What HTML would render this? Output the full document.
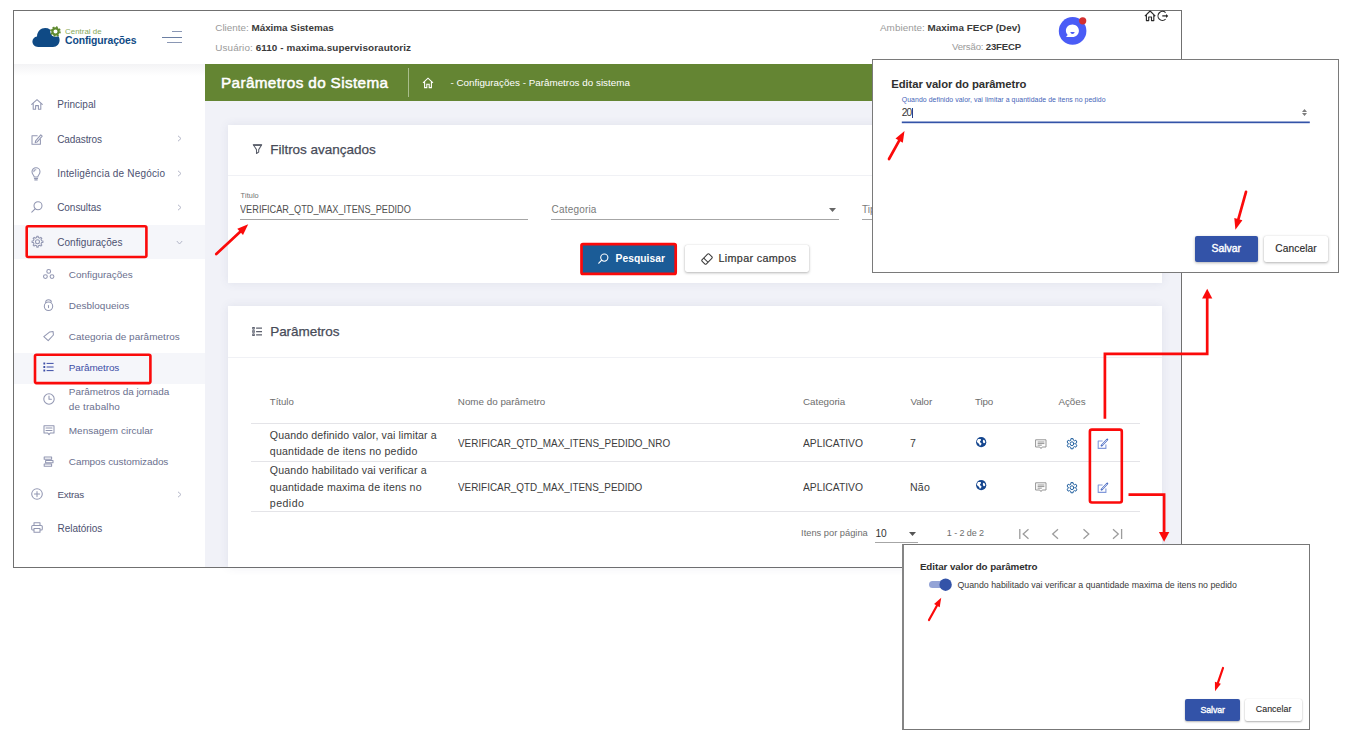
<!DOCTYPE html>
<html><head><meta charset="utf-8"><title>Parametros</title>
<style>
html,body{margin:0;padding:0;background:#fff;}
body{width:1350px;height:741px;position:relative;overflow:hidden;font-family:"Liberation Sans",sans-serif;}
.a{position:absolute;box-sizing:border-box;}
.t{position:absolute;white-space:nowrap;margin:0;padding:0;}
svg{position:absolute;overflow:visible;}
</style></head><body>
<div class="a" style="left:13.0px;top:10.0px;width:1169.0px;height:558.0px;background:#fff;border:1px solid #707070;"></div>
<div class="a" style="left:205.0px;top:101.0px;width:976.0px;height:466.0px;background:#f1f2f8;"></div>
<div class="a" style="left:14.0px;top:64.0px;width:191.0px;height:12.0px;background:linear-gradient(#f3f3f5,#ffffff);"></div>
<div class="a" style="left:205.0px;top:64.0px;width:976.0px;height:37.0px;background:#648533;"></div>
<svg style="left:32px;top:26px" width="30" height="22" viewBox="0 0 30 22">
<path d="M6.2 21 C2.6 21 0.4 18.6 0.4 15.6 C0.4 12.8 2.4 10.8 5 10.4 C5.2 5.4 8.8 2 13.2 2 C16.8 2 19.6 4 20.8 7.2 C24.6 7.2 27.6 10 27.6 14 C27.6 18 24.8 21 21 21 Z" fill="#0f4a85"/>
<circle cx="23.5" cy="5.5" r="5.2" fill="#fff"/>
<circle cx="23.5" cy="5.5" r="3.1" fill="none" stroke="#5f8a2f" stroke-width="2.2"/>
<circle cx="23.5" cy="5.5" r="4.5" fill="none" stroke="#5f8a2f" stroke-width="1.6" stroke-dasharray="1.8 1.73"/>
</svg>
<div class="t" style="left:65.0px;top:25.7px;font-size:7.90px;line-height:11px;letter-spacing:0.025px;color:#86a95a;">Central de</div>
<div class="t" style="left:65.0px;top:34.3px;font-size:10.40px;line-height:14px;letter-spacing:-0.101px;color:#0f4a85;"><span style="font-weight:700;">Configurações</span></div>
<div class="a" style="left:171.5px;top:30.8px;width:10.0px;height:1.0px;background:#8a97b4;"></div>
<div class="a" style="left:162.0px;top:36.6px;width:20.0px;height:1.2px;background:#6b7fa3;"></div>
<div class="a" style="left:167.0px;top:42.2px;width:15.0px;height:1.0px;background:#8a97b4;"></div>
<div class="t" style="left:215.3px;top:20.8px;font-size:9.90px;line-height:14px;letter-spacing:-0.011px;color:#333;"><span style="color:#9a9a9a;">Cliente: </span><span style="font-weight:700;color:#3a3a3a;">Máxima Sistemas</span></div>
<div class="t" style="left:215.3px;top:40.7px;font-size:9.90px;line-height:14px;letter-spacing:0.093px;color:#333;"><span style="color:#9a9a9a;">Usuário: </span><span style="font-weight:700;color:#3a3a3a;">6110 - maxima.supervisorautoriz</span></div>
<div class="t" style="left:880.0px;top:20.7px;font-size:9.90px;line-height:14px;letter-spacing:0.032px;color:#333;"><span style="color:#9a9a9a;">Ambiente: </span><span style="font-weight:700;color:#3a3a3a;">Maxima FECP (Dev)</span></div>
<div class="t" style="left:952.0px;top:40.4px;font-size:9.60px;line-height:14px;letter-spacing:-0.179px;color:#333;"><span style="color:#9a9a9a;">Versão: </span><span style="font-weight:700;color:#3a3a3a;">23FECP</span></div>
<svg style="left:1058px;top:16px" width="30" height="30" viewBox="0 0 30 30">
<circle cx="14.6" cy="14.9" r="13.8" fill="#4a5cf6"/>
<path d="M14.4 8.5 c3.7 0 6.5 2.8 6.5 6.3 c0 3.5 -2.8 6.3 -6.5 6.3 h-5.6 c-0.5 0 -0.7 -0.5 -0.3 -0.9 l1.2 -1.2 c-1.1 -1.1 -1.8 -2.6 -1.8 -4.2 c0 -3.5 2.8 -6.3 6.5 -6.3z" fill="#fff"/>
<path d="M12.3 16 h4.4 c-0.3 1.3 -1.2 1.9 -2.2 1.9 c-1 0 -1.9 -0.6 -2.2 -1.9z" fill="#4a5cf6"/>
<circle cx="24.7" cy="4.8" r="3.6" fill="#d32f2f"/>
</svg>
<svg style="left:1144px;top:10px" width="26" height="12" viewBox="0 0 26 12">
<path d="M0.9 6.2 L6.1 1.0 L11.3 6.2 M2.4 5.0 V10.6 H4.7 V7.0 H7.5 V10.6 H9.8 V5.0" fill="none" stroke="#2a2a2a" stroke-width="1.15" stroke-linejoin="round"/>
<path d="M21.6 2.6 A4.5 4.5 0 1 0 21.6 9.2" fill="none" stroke="#2a2a2a" stroke-width="1.1"/>
<path d="M18.3 5.9 H23.2" fill="none" stroke="#2a2a2a" stroke-width="1.3"/><path d="M22 3.9 L24.2 5.9 L22 7.9Z" fill="#2a2a2a"/>
</svg>
<div class="t" style="left:221.0px;top:72.6px;font-size:15.30px;line-height:20px;letter-spacing:0.359px;color:#ffffff;-webkit-text-stroke:0.50px #ffffff;">Parâmetros do Sistema</div>
<div class="a" style="left:408.0px;top:68.0px;width:1.0px;height:29.0px;background:#a9bd8c;"></div>
<svg style="left:421.5px;top:77px" width="12" height="12" viewBox="0 0 12 12">
<path d="M1 5.8 L6 1.2 L11 5.8 M2.6 4.8 V10.6 H4.8 V7.2 H7.2 V10.6 H9.4 V4.8" fill="none" stroke="#fff" stroke-width="1.1"/></svg>
<div class="t" style="left:450.4px;top:75.8px;font-size:9.85px;line-height:14px;letter-spacing:0.001px;color:#ffffff;">- Configurações - Parâmetros do sistema</div>
<div class="a" style="left:14.0px;top:224.5px;width:191.0px;height:34.0px;background:#f5f6fa;"></div>
<div class="a" style="left:14.0px;top:352.5px;width:191.0px;height:31.0px;background:#f5f6fa;"></div>
<div class="t" style="left:57.2px;top:98.4px;font-size:10.00px;line-height:14px;letter-spacing:0.028px;color:#4d5170;">Principal</div>
<div class="t" style="left:57.2px;top:132.7px;font-size:10.00px;line-height:14px;letter-spacing:-0.086px;color:#4d5170;">Cadastros</div>
<div class="t" style="left:57.2px;top:167.2px;font-size:10.00px;line-height:14px;letter-spacing:0.176px;color:#4d5170;">Inteligência de Negócio</div>
<div class="t" style="left:57.2px;top:201.2px;font-size:10.00px;line-height:14px;letter-spacing:-0.052px;color:#4d5170;">Consultas</div>
<div class="t" style="left:57.2px;top:235.5px;font-size:10.00px;line-height:14px;letter-spacing:0.063px;color:#4d5170;">Configurações</div>
<div class="t" style="left:57.5px;top:488.0px;font-size:9.80px;line-height:14px;letter-spacing:-0.246px;color:#4d5170;">Extras</div>
<div class="t" style="left:57.5px;top:522.0px;font-size:10.00px;line-height:14px;letter-spacing:-0.032px;color:#4d5170;">Relatórios</div>
<div class="t" style="left:68.8px;top:267.7px;font-size:9.95px;line-height:14px;letter-spacing:-0.012px;color:#6a6f8e;">Configurações</div>
<div class="t" style="left:68.8px;top:298.7px;font-size:9.95px;line-height:14px;letter-spacing:0.017px;color:#6a6f8e;">Desbloqueios</div>
<div class="t" style="left:68.8px;top:329.8px;font-size:9.95px;line-height:14px;letter-spacing:0.049px;color:#6a6f8e;">Categoria de parâmetros</div>
<div class="t" style="left:68.8px;top:360.8px;font-size:9.95px;line-height:14px;letter-spacing:-0.093px;color:#3c4da6;">Parâmetros</div>
<div class="t" style="left:68.8px;top:385.1px;font-size:9.95px;line-height:14px;letter-spacing:-0.025px;color:#6a6f8e;">Parâmetros da jornada</div>
<div class="t" style="left:68.8px;top:400.0px;font-size:9.95px;line-height:14px;letter-spacing:0.137px;color:#6a6f8e;">de trabalho</div>
<div class="t" style="left:68.8px;top:423.6px;font-size:9.95px;line-height:14px;letter-spacing:0.026px;color:#6a6f8e;">Mensagem circular</div>
<div class="t" style="left:68.8px;top:454.5px;font-size:9.95px;line-height:14px;letter-spacing:-0.055px;color:#6a6f8e;">Campos customizados</div>
<svg style="left:176.5px;top:135.1px" width="5" height="7" viewBox="0 0 5 7"><path d="M1 0.8 L4 3.5 L1 6.2" fill="none" stroke="#b3b6c8" stroke-width="1"/></svg>
<svg style="left:176.5px;top:169.6px" width="5" height="7" viewBox="0 0 5 7"><path d="M1 0.8 L4 3.5 L1 6.2" fill="none" stroke="#b3b6c8" stroke-width="1"/></svg>
<svg style="left:176.5px;top:203.6px" width="5" height="7" viewBox="0 0 5 7"><path d="M1 0.8 L4 3.5 L1 6.2" fill="none" stroke="#b3b6c8" stroke-width="1"/></svg>
<svg style="left:176.5px;top:490.5px" width="5" height="7" viewBox="0 0 5 7"><path d="M1 0.8 L4 3.5 L1 6.2" fill="none" stroke="#b3b6c8" stroke-width="1"/></svg>
<svg style="left:175.5px;top:239.5px" width="7" height="5" viewBox="0 0 7 5"><path d="M0.8 1 L3.5 4 L6.2 1" fill="none" stroke="#b3b6c8" stroke-width="1"/></svg>
<div class="a" style="left:228.3px;top:124.6px;width:933.9px;height:158.8px;background:#fff;box-shadow:0 0 9px rgba(70,80,130,0.10);"></div>
<div class="a" style="left:228.3px;top:175.3px;width:933.9px;height:1.0px;background:#f0f1f5;"></div>
<svg style="left:252px;top:144px" width="11" height="10" viewBox="0 0 11 10"><path d="M1.3 0.8 H9.7 L6.7 5.6 V8 L4.5 9.5 V5.6 Z" fill="none" stroke="#5a5e6a" stroke-width="1.05" stroke-linejoin="round"/><path d="M1.3 1.2 H9.7" stroke="#5a5e6a" stroke-width="1.5"/></svg>
<div class="t" style="left:270.2px;top:140.6px;font-size:13.50px;line-height:18px;letter-spacing:-0.012px;color:#474b58;-webkit-text-stroke:0.25px #474b58;">Filtros avançados</div>
<div class="t" style="left:240.4px;top:190.1px;font-size:7.30px;line-height:11px;letter-spacing:-0.010px;color:#707070;">Título</div>
<div class="t" style="left:240.2px;top:203.0px;font-size:10.10px;line-height:14px;letter-spacing:0.000px;color:#505050;transform:scaleX(0.9095);transform-origin:left center;">VERIFICAR_QTD_MAX_ITENS_PEDIDO</div>
<div class="a" style="left:240.2px;top:219.0px;width:288.0px;height:1.0px;background:#a6a6a6;"></div>
<div class="t" style="left:551.6px;top:202.8px;font-size:10.00px;line-height:14px;letter-spacing:0.182px;color:#7a7a7a;">Categoria</div>
<div class="a" style="left:551.2px;top:219.0px;width:288.0px;height:1.0px;background:#a6a6a6;"></div>
<svg style="left:828.5px;top:207.5px" width="7" height="4" viewBox="0 0 7 4"><path d="M0 0 H7 L3.5 4Z" fill="#666"/></svg>
<div class="t" style="left:862.0px;top:202.8px;font-size:10.00px;line-height:14px;letter-spacing:0.000px;color:#7a7a7a;">Tipo</div>
<div class="a" style="left:862.0px;top:219.0px;width:288.0px;height:1.0px;background:#a6a6a6;"></div>
<div class="a" style="left:581.0px;top:244.0px;width:95.0px;height:30.0px;background:#1b5c97;"></div>
<svg style="left:0;top:0" width="1350" height="741"><rect x="581.5" y="244.1" width="94.2" height="29.8" rx="1.5" fill="#1b5c97" stroke="#fb0a0a" stroke-width="2.7"/></svg>
<svg style="left:598px;top:253px" width="11" height="11" viewBox="0 0 11 11"><circle cx="6.3" cy="4.6" r="3.6" fill="none" stroke="#fff" stroke-width="1.1"/><path d="M3.7 7.2 L0.8 10.2" stroke="#fff" stroke-width="1.2" stroke-linecap="round"/></svg>
<div class="t" style="left:615.5px;top:251.6px;font-size:10.30px;line-height:14px;letter-spacing:0.029px;color:#ffffff;"><span style="font-weight:700;">Pesquisar</span></div>
<div class="a" style="left:684.7px;top:244.6px;width:124.0px;height:27.6px;background:#fff;border-radius:2px;box-shadow:0 1px 3px rgba(0,0,0,0.28),0 0 1px rgba(0,0,0,0.18);"></div>
<svg style="left:700px;top:251.6px" width="14" height="14" viewBox="0 0 14 14"><g transform="translate(7 7) rotate(-45)"><rect x="-5" y="-3" width="10" height="6" rx="1.2" fill="none" stroke="#3a3a3a" stroke-width="1.05"/><path d="M-1.6 -3 V3" stroke="#3a3a3a" stroke-width="1.05"/></g></svg>
<div class="t" style="left:718.5px;top:251.1px;font-size:10.80px;line-height:15px;letter-spacing:0.321px;color:#333;-webkit-text-stroke:0.20px #333;">Limpar campos</div>
<div class="a" style="left:228.3px;top:306.2px;width:933.9px;height:260.8px;background:#fff;box-shadow:0 0 9px rgba(70,80,130,0.10);"></div>
<div class="a" style="left:228.3px;top:356.6px;width:933.9px;height:1.0px;background:#f0f1f5;"></div>
<svg style="left:252px;top:327px" width="11" height="10" viewBox="0 0 11 10"><path d="M4.1 1.2 H10 M4.1 4.5 H10 M4.1 7.9 H10" stroke="#5d616e" stroke-width="1.25"/><path d="M0.2 1.2 H2.8 M0.2 4.5 H2.8 M0.2 7.9 H2.8" stroke="#5d616e" stroke-width="2.3"/><path d="M1.5 1 V8" stroke="#8a8d98" stroke-width="1.6"/></svg>
<div class="t" style="left:270.2px;top:322.6px;font-size:13.50px;line-height:18px;letter-spacing:-0.048px;color:#474b58;-webkit-text-stroke:0.25px #474b58;">Parâmetros</div>
<div class="t" style="left:269.8px;top:395.0px;font-size:9.60px;line-height:14px;letter-spacing:0.000px;color:#6d6d6d;">Título</div>
<div class="t" style="left:457.8px;top:395.0px;font-size:9.80px;line-height:14px;letter-spacing:0.014px;color:#6d6d6d;">Nome do parâmetro</div>
<div class="t" style="left:803.0px;top:395.0px;font-size:9.80px;line-height:14px;letter-spacing:-0.033px;color:#6d6d6d;">Categoria</div>
<div class="t" style="left:910.4px;top:395.0px;font-size:9.80px;line-height:14px;letter-spacing:-0.070px;color:#6d6d6d;">Valor</div>
<div class="t" style="left:974.9px;top:395.0px;font-size:9.80px;line-height:14px;letter-spacing:-0.125px;color:#6d6d6d;">Tipo</div>
<div class="t" style="left:1058.5px;top:395.0px;font-size:9.80px;line-height:14px;letter-spacing:-0.048px;color:#6d6d6d;">Ações</div>
<div class="a" style="left:250.8px;top:423.4px;width:889.2px;height:1.0px;background:#e4e4e8;"></div>
<div class="a" style="left:250.8px;top:461.2px;width:889.2px;height:1.0px;background:#e4e4e8;"></div>
<div class="a" style="left:250.8px;top:510.9px;width:889.2px;height:1.0px;background:#e4e4e8;"></div>
<div class="t" style="left:269.8px;top:427.8px;font-size:10.60px;line-height:15px;letter-spacing:0.121px;color:#3c3c3c;">Quando definido valor, vai limitar a</div>
<div class="t" style="left:269.8px;top:444.0px;font-size:10.60px;line-height:15px;letter-spacing:0.198px;color:#3c3c3c;">quantidade de itens no pedido</div>
<div class="t" style="left:269.8px;top:463.0px;font-size:10.60px;line-height:15px;letter-spacing:0.172px;color:#3c3c3c;">Quando habilitado vai verificar a</div>
<div class="t" style="left:269.8px;top:479.5px;font-size:10.60px;line-height:15px;letter-spacing:0.161px;color:#3c3c3c;">quantidade maxima de itens no</div>
<div class="t" style="left:269.8px;top:496.0px;font-size:10.60px;line-height:15px;letter-spacing:0.461px;color:#3c3c3c;">pedido</div>
<div class="t" style="left:457.8px;top:435.7px;font-size:10.70px;line-height:15px;letter-spacing:0.000px;color:#3c3c3c;transform:scaleX(0.9278);transform-origin:left center;">VERIFICAR_QTD_MAX_ITENS_PEDIDO_NRO</div>
<div class="t" style="left:457.8px;top:479.6px;font-size:10.70px;line-height:15px;letter-spacing:0.000px;color:#3c3c3c;transform:scaleX(0.9263);transform-origin:left center;">VERIFICAR_QTD_MAX_ITENS_PEDIDO</div>
<div class="t" style="left:803.2px;top:435.9px;font-size:10.70px;line-height:15px;letter-spacing:0.000px;color:#3c3c3c;transform:scaleX(0.9641);transform-origin:left center;">APLICATIVO</div>
<div class="t" style="left:803.2px;top:479.8px;font-size:10.70px;line-height:15px;letter-spacing:0.000px;color:#3c3c3c;transform:scaleX(0.9641);transform-origin:left center;">APLICATIVO</div>
<div class="t" style="left:910.0px;top:435.9px;font-size:10.60px;line-height:15px;letter-spacing:0.000px;color:#3c3c3c;">7</div>
<div class="t" style="left:910.0px;top:479.8px;font-size:10.60px;line-height:15px;letter-spacing:0.185px;color:#3c3c3c;">Não</div>
<div class="t" style="left:801.1px;top:527.3px;font-size:9.30px;line-height:13px;letter-spacing:0.000px;color:#6d6d6d;">Itens por página</div>
<div class="t" style="left:875.4px;top:526.8px;font-size:10.20px;line-height:14px;letter-spacing:0.000px;color:#333;">10</div>
<div class="a" style="left:875.0px;top:542.3px;width:43.0px;height:1.0px;background:#a6a6a6;"></div>
<svg style="left:908.7px;top:531.5px" width="7" height="4" viewBox="0 0 7 4"><path d="M0 0 H7 L3.5 4Z" fill="#555"/></svg>
<div class="t" style="left:946.8px;top:527.3px;font-size:9.00px;line-height:13px;letter-spacing:-0.083px;color:#6d6d6d;">1 - 2 de 2</div>
<svg style="left:1018px;top:528px" width="106" height="12" viewBox="0 0 106 12">
<g fill="none" stroke="#9c9c9c" stroke-width="1.3"><path d="M1.8 1 V11 M10.5 1.2 L5.2 6 L10.5 10.8"/><path d="M40 1.2 L34.7 6 L40 10.8"/><path d="M65.5 1.2 L70.8 6 L65.5 10.8"/><path d="M95 1.2 L100.3 6 L95 10.8 M103.6 1 V11"/></g></svg>
<div class="a" style="left:872.0px;top:59.0px;width:467.0px;height:214.0px;background:#fff;border:1px solid #7a7a7a;"></div>
<div class="t" style="left:891.3px;top:75.8px;font-size:11.30px;line-height:16px;letter-spacing:-0.101px;color:#303030;"><span style="font-weight:700;">Editar valor do parâmetro</span></div>
<div class="t" style="left:901.8px;top:94.9px;font-size:6.90px;line-height:10px;letter-spacing:0.057px;color:#4464b8;">Quando definido valor, vai limitar a quantidade de itens no pedido</div>
<div class="t" style="left:901.8px;top:105.8px;font-size:10.20px;line-height:14px;letter-spacing:-1.023px;color:#333;">20</div>
<div class="a" style="left:911.8px;top:108.3px;width:1.0px;height:9.8px;background:#2c3f86;"></div>
<svg style="left:0;top:0" width="1350" height="741"><rect x="901.8" y="121.5" width="408" height="1.7" fill="#3353a8"/></svg>
<svg style="left:1301.6px;top:108.8px" width="5" height="7" viewBox="0 0 5 7"><path d="M0 2.9 L2.5 0 L5 2.9Z M0 4.1 L2.5 7 L5 4.1Z" fill="#7d7d7d"/></svg>
<div class="a" style="left:1195.0px;top:236.0px;width:62.8px;height:25.5px;background:#3353a8;border-radius:2px;box-shadow:0 1px 3px rgba(0,0,0,0.3);"></div>
<div class="t" style="left:1211.5px;top:242.2px;font-size:10.40px;line-height:14px;letter-spacing:0.003px;color:#fff;-webkit-text-stroke:0.40px #fff;">Salvar</div>
<div class="a" style="left:1263.5px;top:236.0px;width:64.6px;height:25.5px;background:#fff;border-radius:2px;box-shadow:0 1px 3px rgba(0,0,0,0.3),0 0 1px rgba(0,0,0,0.15);"></div>
<div class="t" style="left:1275.3px;top:242.2px;font-size:10.20px;line-height:14px;letter-spacing:0.085px;color:#2a2a2a;-webkit-text-stroke:0.15px #2a2a2a;">Cancelar</div>
<div class="a" style="left:902.0px;top:544.0px;width:408.0px;height:186.0px;background:#fff;border:1px solid #777;border-left:2px solid #858585;"></div>
<div class="t" style="left:919.9px;top:559.9px;font-size:9.80px;line-height:14px;letter-spacing:-0.067px;color:#303030;"><span style="font-weight:700;">Editar valor do parâmetro</span></div>
<div class="a" style="left:929.2px;top:581.2px;width:21.0px;height:7.0px;background:#93a3d6;border-radius:3.5px;"></div>
<svg style="left:0;top:0" width="1350" height="741"><circle cx="945.6" cy="584.7" r="6.2" fill="#3353a8"/></svg>
<div class="t" style="left:957.4px;top:578.7px;font-size:8.80px;line-height:13px;letter-spacing:0.004px;color:#3a3a3a;">Quando habilitado vai verificar a quantidade maxima de itens no pedido</div>
<div class="a" style="left:1185.4px;top:698.6px;width:54.6px;height:22.3px;background:#3353a8;border-radius:2px;box-shadow:0 1px 2px rgba(0,0,0,0.3);"></div>
<div class="t" style="left:1200.4px;top:703.5px;font-size:8.80px;line-height:13px;letter-spacing:-0.057px;color:#fff;-webkit-text-stroke:0.35px #fff;">Salvar</div>
<div class="a" style="left:1245.3px;top:698.6px;width:56.7px;height:22.3px;background:#fff;border-radius:2px;box-shadow:0 1px 2px rgba(0,0,0,0.3),0 0 1px rgba(0,0,0,0.15);"></div>
<div class="t" style="left:1255.8px;top:703.4px;font-size:8.80px;line-height:13px;letter-spacing:0.060px;color:#2a2a2a;-webkit-text-stroke:0.12px #2a2a2a;">Cancelar</div>
<svg style="left:0;top:0" width="1350" height="741"><rect x="26.70" y="226.30" width="119.70" height="30.70" rx="1.5" fill="none" stroke="#fb0a0a" stroke-width="2.60"/></svg>
<svg style="left:0;top:0" width="1350" height="741"><rect x="35.00" y="354.70" width="115.40" height="28.40" rx="1.5" fill="none" stroke="#fb0a0a" stroke-width="2.60"/></svg>
<svg style="left:0;top:0" width="1350" height="741"><rect x="1089.90" y="429.60" width="31.90" height="72.90" rx="2.0" fill="none" stroke="#fb0a0a" stroke-width="2.60"/></svg>
<svg style="left:0;top:0" width="1350" height="741"><path d="M216.3 254.1 L240.2 231.8" stroke="#fb0a0a" stroke-width="2.7" stroke-linecap="round"/><path d="M248.2 224.3 L243.0 234.9 L237.3 228.7 Z" fill="#fb0a0a"/></svg>
<svg style="left:0;top:0" width="1350" height="741"><path d="M889.0 159.0 L899.2 140.6" stroke="#fb0a0a" stroke-width="2.7" stroke-linecap="round"/><path d="M904.5 131.0 L902.8 142.7 L895.5 138.6 Z" fill="#fb0a0a"/></svg>
<svg style="left:0;top:0" width="1350" height="741"><path d="M1246.0 191.8 L1238.4 219.1" stroke="#fb0a0a" stroke-width="2.7" stroke-linecap="round"/><path d="M1235.4 229.7 L1234.3 218.0 L1242.4 220.2 Z" fill="#fb0a0a"/></svg>
<svg style="left:0;top:0" width="1350" height="741"><path d="M929.0 620.0 L936.9 605.7" stroke="#fb0a0a" stroke-width="2.2" stroke-linecap="round"/><path d="M941.2 597.8 L939.7 607.2 L934.1 604.1 Z" fill="#fb0a0a"/></svg>
<svg style="left:0;top:0" width="1350" height="741"><path d="M1223.0 668.0 L1217.9 682.8" stroke="#fb0a0a" stroke-width="2.2" stroke-linecap="round"/><path d="M1215.0 691.3 L1214.9 681.7 L1220.9 683.8 Z" fill="#fb0a0a"/></svg>
<svg style="left:0;top:0" width="1350" height="741">
<path d="M1104.9 418.8 V353.8 H1207.2 V297" fill="none" stroke="#fb0a0a" stroke-width="2.7"/>
<path d="M1207.2 288.8 L1212.3 298.5 H1202.1 Z" fill="#fb0a0a"/>
<path d="M1128.5 494.7 H1164.1 V533" fill="none" stroke="#fb0a0a" stroke-width="2.7"/>
<path d="M1164.1 541.8 L1158.9 532 H1169.3 Z" fill="#fb0a0a"/>
</svg>
<svg style="left:31.0px;top:98.8px" width="12" height="11" viewBox="0 0 12 11"><path d="M0.7 5.4 L6 0.7 L11.3 5.4 M2.2 4.2 V10.3 H4.6 V6.6 H7.4 V10.3 H9.8 V4.2" fill="none" stroke="#9297b2" stroke-width="1.05" stroke-linejoin="round" stroke-linecap="round"/></svg>
<svg style="left:31.2px;top:133.5px" width="12" height="11" viewBox="0 0 12 11"><path d="M6.2 1.8 H1 V10.2 H9.4 V5.6" fill="none" stroke="#9297b2" stroke-width="1.05" stroke-linejoin="round" stroke-linecap="round"/><path d="M4.6 6.9 L9.8 0.9 L11.2 2.1 L6 8.1 L4.2 8.6 Z" fill="none" stroke="#9297b2" stroke-width="1.05" stroke-linejoin="round" stroke-linecap="round"/></svg>
<svg style="left:30.6px;top:166.6px" width="10" height="14" viewBox="0 0 10 14"><path d="M3.2 10 C3.2 8.4 1 7.4 1 4.8 C1 2.6 2.8 0.8 5 0.8 C7.2 0.8 9 2.6 9 4.8 C9 7.4 6.8 8.4 6.8 10 Z M3.4 11.6 H6.6 M3.8 13 H6.2" fill="none" stroke="#9297b2" stroke-width="1.05" stroke-linejoin="round" stroke-linecap="round"/><path d="M2.9 4.6 C2.9 3.5 3.8 2.7 4.9 2.7" fill="none" stroke="#9297b2" stroke-width="1.05" stroke-linejoin="round" stroke-linecap="round"/></svg>
<svg style="left:31.2px;top:200.8px" width="12" height="12" viewBox="0 0 12 12"><circle cx="7" cy="4.8" r="4" fill="none" stroke="#9297b2" stroke-width="1.05" stroke-linejoin="round" stroke-linecap="round"/><path d="M4.1 7.8 L0.8 11.2" fill="none" stroke="#9297b2" stroke-width="1.05" stroke-linejoin="round" stroke-linecap="round"/></svg>
<svg style="left:30.7px;top:235.5px" width="13" height="11.4" viewBox="0 0 13 11.4"><path d="M5.64 1.59 L5.78 0.25 L7.22 0.25 L7.36 1.59 L8.80 2.19 L9.84 1.33 L10.87 2.36 L10.01 3.40 L10.61 4.84 L11.95 4.98 L11.95 6.42 L10.61 6.56 L10.01 8.00 L10.87 9.04 L9.84 10.07 L8.80 9.21 L7.36 9.81 L7.22 11.15 L5.78 11.15 L5.64 9.81 L4.20 9.21 L3.16 10.07 L2.13 9.04 L2.99 8.00 L2.39 6.56 L1.05 6.42 L1.05 4.98 L2.39 4.84 L2.99 3.40 L2.13 2.36 L3.16 1.33 L4.20 2.19 Z" fill="none" stroke="#9297b2" stroke-width="1.05" stroke-linejoin="round" stroke-linecap="round"/><circle cx="6.5" cy="5.7" r="2" fill="none" stroke="#9297b2" stroke-width="1.05" stroke-linejoin="round" stroke-linecap="round"/></svg>
<svg style="left:0;top:0" width="220" height="360" viewBox="0 0 220 360"><circle cx="48.7" cy="271.4" r="1.9" fill="none" stroke="#9297b2" stroke-width="1.05" stroke-linejoin="round" stroke-linecap="round"/><circle cx="45.4" cy="276.6" r="1.9" fill="none" stroke="#9297b2" stroke-width="1.05" stroke-linejoin="round" stroke-linecap="round"/><circle cx="52" cy="276.6" r="1.9" fill="none" stroke="#9297b2" stroke-width="1.05" stroke-linejoin="round" stroke-linecap="round"/><circle cx="48.5" cy="306.3" r="4.2" fill="none" stroke="#9297b2" stroke-width="1.05" stroke-linejoin="round" stroke-linecap="round"/><path d="M45.7 302.6 C45.6 300.6 46.9 299.7 48.5 299.7 C50.2 299.7 51.3 300.6 51.3 301.9" fill="none" stroke="#9297b2" stroke-width="1.05" stroke-linejoin="round" stroke-linecap="round"/><path d="M48.5 305.4 V307.6" fill="none" stroke="#9297b2" stroke-width="1.05" stroke-linejoin="round" stroke-linecap="round"/><path d="M43.8 336.7 L49.8 331.9 L53.1 331.5 L53.4 335 L48.2 340.6 Z" fill="none" stroke="#9297b2" stroke-width="1.05" stroke-linejoin="round" stroke-linecap="round"/></svg>
<svg style="left:43.3px;top:362.4px" width="11" height="10" viewBox="0 0 11 10"><path d="M3.6 1.4 H10.6 M3.6 5 H10.6 M3.6 8.6 H10.6" stroke="#3c4da6" stroke-width="1" fill="none"/><path d="M0.4 1.4 H2.2 M0.4 5 H2.2 M0.4 8.6 H2.2" stroke="#3c4da6" stroke-width="2" fill="none"/></svg>
<svg style="left:42.6px;top:392.6px" width="12" height="12" viewBox="0 0 12 12"><circle cx="6" cy="6" r="5.2" fill="none" stroke="#9297b2" stroke-width="1.05" stroke-linejoin="round" stroke-linecap="round"/><path d="M6 3 V6.3 H8.4" fill="none" stroke="#9297b2" stroke-width="1.05" stroke-linejoin="round" stroke-linecap="round"/></svg>
<svg style="left:42.5px;top:424.7px" width="12" height="11" viewBox="0 0 12 11"><path d="M1 0.8 H11 V8 H7.2 L6 9.6 L4.8 8 H1 Z" fill="none" stroke="#9297b2" stroke-width="1.05" stroke-linejoin="round" stroke-linecap="round"/><path d="M3 3 H9 M3 5.4 H9" fill="none" stroke="#9297b2" stroke-width="1.05" stroke-linejoin="round" stroke-linecap="round"/></svg>
<svg style="left:43.0px;top:455.7px" width="11" height="11" viewBox="0 0 11 11"><path d="M1.2 0.9 H8.6 V3.3 H1.2 Z M2.6 4.5 H10 V6.7 H2.6 Z M1.2 7.9 H8.6 V10.2 H1.2 Z" fill="none" stroke="#9297b2" stroke-width="1.05" stroke-linejoin="round" stroke-linecap="round"/></svg>
<svg style="left:31.0px;top:488.0px" width="12" height="12" viewBox="0 0 12 12"><circle cx="6" cy="6" r="5.3" fill="none" stroke="#9297b2" stroke-width="1.05" stroke-linejoin="round" stroke-linecap="round"/><path d="M6 3.4 V8.6 M3.4 6 H8.6" fill="none" stroke="#9297b2" stroke-width="1.05" stroke-linejoin="round" stroke-linecap="round"/></svg>
<svg style="left:31.2px;top:522.3px" width="12" height="11" viewBox="0 0 12 11"><path d="M3 3.4 V0.8 H9 V3.4 M3 8 H1.6 C1 8 0.7 7.6 0.7 7 V4.6 C0.7 3.9 1.1 3.4 1.8 3.4 H10.2 C10.9 3.4 11.3 3.9 11.3 4.6 V7 C11.3 7.6 11 8 10.4 8 H9 M3 6.4 H9 V10.2 H3 Z" fill="none" stroke="#9297b2" stroke-width="1.05" stroke-linejoin="round" stroke-linecap="round"/></svg>
<svg style="left:975.8px;top:436.5px" width="10.4" height="10.4" viewBox="0 0 10.4 10.4"><circle cx="5.2" cy="5.2" r="5.1" fill="#15468f"/><path d="M2.0 2.0 C3.2 2.3 4.4 1.5 5.0 2.4 C5.4 3.3 3.8 3.9 4.0 4.9 C4.2 5.7 5.5 5.5 5.5 6.6 C5.5 7.7 4.4 9.0 3.8 8.8 C3.4 7.7 3.4 6.9 2.3 6.2 C1.4 5.6 0.8 5.1 1.0 3.9 Z M7.4 2.8 C8.4 3.0 9.3 4.0 9.3 5.2 C8.9 5.9 8.2 6.6 7.5 5.9 C6.8 5.2 6.5 3.7 7.4 2.8Z" fill="#fff"/></svg>
<svg style="left:1034.6px;top:438.5px" width="12" height="11" viewBox="0 0 12 11"><path d="M1 0.8 H11 V8 H7.2 L6 9.6 L4.8 8 H1 Z" fill="none" stroke="#8f8f8f" stroke-width="0.95" stroke-linejoin="round" stroke-linecap="round"/><path d="M3 3 H9 M3 4.6 H9 M3 6.2 H6.4" fill="none" stroke="#8f8f8f" stroke-width="0.95" stroke-linejoin="round" stroke-linecap="round"/></svg>
<svg style="left:1065.9px;top:437.7px" width="12" height="11.4" viewBox="0 0 12 11.4"><path d="M4.75 2.01 L4.92 0.61 L7.08 0.61 L7.25 2.01 L8.57 2.77 L9.86 2.22 L10.95 4.09 L9.83 4.94 L9.83 6.46 L10.95 7.31 L9.86 9.18 L8.57 8.63 L7.25 9.39 L7.08 10.79 L4.92 10.79 L4.75 9.39 L3.43 8.63 L2.14 9.18 L1.05 7.31 L2.17 6.46 L2.17 4.94 L1.05 4.09 L2.14 2.22 L3.43 2.77 Z" fill="none" stroke="#1f5d9e" stroke-width="1.0" stroke-linejoin="round" stroke-linecap="round"/><circle cx="6" cy="5.7" r="1.9" fill="none" stroke="#1f5d9e" stroke-width="1.0" stroke-linejoin="round" stroke-linecap="round"/></svg>
<svg style="left:1096px;top:437.8px" width="14" height="13" viewBox="0 0 14 13"><path d="M6.6 3 H2.2 V10.4 H9.9 V6.6" fill="none" stroke="#8299da" stroke-width="1.1" stroke-linejoin="round"/><path d="M5.6 7.6 L11.2 1.6" stroke="#4f6fc4" stroke-width="2.1" stroke-linecap="round"/><path d="M6.4 6.8 L10.6 2.3" stroke="#e9edfa" stroke-width="0.8" stroke-linecap="round"/></svg>
<svg style="left:975.8px;top:480.3px" width="10.4" height="10.4" viewBox="0 0 10.4 10.4"><circle cx="5.2" cy="5.2" r="5.1" fill="#15468f"/><path d="M2.0 2.0 C3.2 2.3 4.4 1.5 5.0 2.4 C5.4 3.3 3.8 3.9 4.0 4.9 C4.2 5.7 5.5 5.5 5.5 6.6 C5.5 7.7 4.4 9.0 3.8 8.8 C3.4 7.7 3.4 6.9 2.3 6.2 C1.4 5.6 0.8 5.1 1.0 3.9 Z M7.4 2.8 C8.4 3.0 9.3 4.0 9.3 5.2 C8.9 5.9 8.2 6.6 7.5 5.9 C6.8 5.2 6.5 3.7 7.4 2.8Z" fill="#fff"/></svg>
<svg style="left:1034.6px;top:482.3px" width="12" height="11" viewBox="0 0 12 11"><path d="M1 0.8 H11 V8 H7.2 L6 9.6 L4.8 8 H1 Z" fill="none" stroke="#8f8f8f" stroke-width="0.95" stroke-linejoin="round" stroke-linecap="round"/><path d="M3 3 H9 M3 4.6 H9 M3 6.2 H6.4" fill="none" stroke="#8f8f8f" stroke-width="0.95" stroke-linejoin="round" stroke-linecap="round"/></svg>
<svg style="left:1065.9px;top:481.5px" width="12" height="11.4" viewBox="0 0 12 11.4"><path d="M4.75 2.01 L4.92 0.61 L7.08 0.61 L7.25 2.01 L8.57 2.77 L9.86 2.22 L10.95 4.09 L9.83 4.94 L9.83 6.46 L10.95 7.31 L9.86 9.18 L8.57 8.63 L7.25 9.39 L7.08 10.79 L4.92 10.79 L4.75 9.39 L3.43 8.63 L2.14 9.18 L1.05 7.31 L2.17 6.46 L2.17 4.94 L1.05 4.09 L2.14 2.22 L3.43 2.77 Z" fill="none" stroke="#1f5d9e" stroke-width="1.0" stroke-linejoin="round" stroke-linecap="round"/><circle cx="6" cy="5.7" r="1.9" fill="none" stroke="#1f5d9e" stroke-width="1.0" stroke-linejoin="round" stroke-linecap="round"/></svg>
<svg style="left:1096px;top:481.6px" width="14" height="13" viewBox="0 0 14 13"><path d="M6.6 3 H2.2 V10.4 H9.9 V6.6" fill="none" stroke="#8299da" stroke-width="1.1" stroke-linejoin="round"/><path d="M5.6 7.6 L11.2 1.6" stroke="#4f6fc4" stroke-width="2.1" stroke-linecap="round"/><path d="M6.4 6.8 L10.6 2.3" stroke="#e9edfa" stroke-width="0.8" stroke-linecap="round"/></svg>
</body></html>
